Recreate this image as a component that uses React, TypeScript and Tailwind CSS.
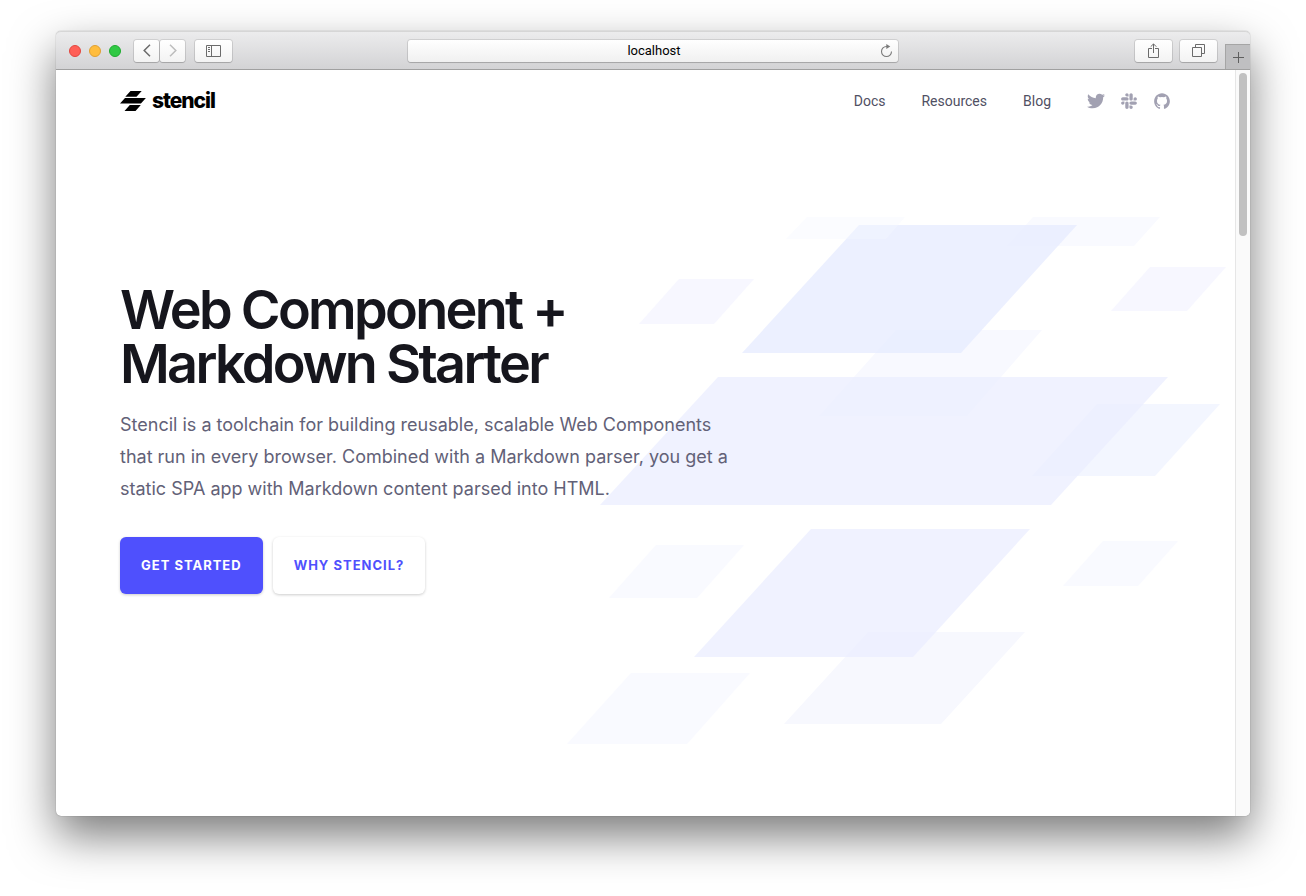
import type { ReactNode } from "react";
import { FaSlack, FaTwitter } from "react-icons/fa";
import { IoLogoGithub } from "react-icons/io5";

type Shape = { points: string; fill: string; opacity: number };

const shapes: Shape[] = [
  { points: "466,0 593,0 567,29 440,29", fill: "#f9faff", opacity: 1 },
  { points: "112,62 187,62 147,107 72,107", fill: "#f7f7ff", opacity: 1 },
  { points: "583,50 659,50 620,94 544,94", fill: "#f7f7ff", opacity: 1 },
  { points: "329,113 475,113 400,199 252,199", fill: "#f8f9ff", opacity: 1 },
  { points: "530,187 653,187 588,259 465,259", fill: "#f3f6ff", opacity: 1 },
  { points: "301,415 458,415 374,507 217,507", fill: "#f7f8fe", opacity: 1 },
  { points: "89,328 177,328 130,381 42,381", fill: "#f9faff", opacity: 1 },
  { points: "536,324 611,324 571,369 496,369", fill: "#f9faff", opacity: 1 },
  { points: "64,456 183,456 120,527 0,527", fill: "#f9faff", opacity: 1 },
  { points: "292,8 510,8 394,136 175,136", fill: "#e6ebff", opacity: 0.75 },
  { points: "151,160 601,160 484,288 33,288", fill: "#ebeeff", opacity: 0.75 },
  { points: "244,312 463,312 346,440 127,440", fill: "#ebeeff", opacity: 0.75 },
  { points: "240,0 338,0 319,22 219,22", fill: "#f5f7ff", opacity: 0.4 },
];

const navLinks = ["Docs", "Resources", "Blog"];

function ToolbarButton({ label, className = "", children }: { label: string; className?: string; children: ReactNode }) {
  return (
    <button
      type="button"
      aria-label={label}
      className={`flex h-[22px] items-center justify-center bg-linear-to-b from-white to-[#f3f3f3] text-[#6b6b6b] shadow-[0_0_0_1px_rgba(0,0,0,0.1),0_1px_1px_rgba(0,0,0,0.15)] ${className}`}
    >
      {children}
    </button>
  );
}

function TitleBar() {
  return (
    <div className="flex h-[39px] items-center rounded-t-[5px] border-t border-b border-t-[#d6d6d6] border-b-[#a0a0a0] bg-linear-to-b from-[#ececed] to-[#d3d3d5]">
      <div className="flex flex-1 items-center">
        <div className="ml-[13px] flex gap-2">
          <button type="button" aria-label="Close" className="size-3 rounded-full border border-[#e2463f] bg-[#ff5f57]" />
          <button type="button" aria-label="Minimize" className="size-3 rounded-full border border-[#e0a032] bg-[#ffbd3e]" />
          <button type="button" aria-label="Zoom" className="size-3 rounded-full border border-[#1eab2f] bg-[#30c944]" />
        </div>
        <div className="ml-[13px] flex gap-px">
          <ToolbarButton label="Back" className="w-[25px] rounded-[3px]">
            <svg width="8" height="13" viewBox="0 0 8 13" fill="none" stroke="currentColor" strokeWidth="1.5">
              <path d="M7 .8 1.2 6.500 7 12.200" />
            </svg>
          </ToolbarButton>
          <ToolbarButton label="Forward" className="w-[25px] rounded-[3px]">
            <svg width="8" height="13" viewBox="0 0 8 13" fill="none" stroke="#bdbdbd" strokeWidth="1.500">
              <path d="m1 .8 5.800 5.700L1 12.200" />
            </svg>
          </ToolbarButton>
        </div>
        <ToolbarButton label="Show sidebar" className="ml-[10px] w-[37px] rounded-[3px]">
          <svg width="15" height="12" viewBox="0 0 15 12" fill="none" stroke="currentColor">
            <path d="M.5.5h14v11H.5zM5.500.5v11M2 2.500h2M2 4.500h2M2 6.500h2" />
          </svg>
        </ToolbarButton>
      </div>
      <div className="flex h-[22px] w-[41%] items-center rounded-[3px] bg-linear-to-b from-white to-[#f0f0f0] pr-[5px] shadow-[0_0_0_1px_rgba(0,0,0,0.1),0_1px_1px_rgba(0,0,0,0.15)]">
        <input
          type="text"
          aria-label="Address"
          defaultValue="localhost"
          className="min-w-0 flex-1 bg-transparent pl-5 text-center font-[Roboto,sans-serif] text-[13px] text-black outline-none"
        />
        <button type="button" aria-label="Reload" className="text-[#7a7a7a]">
          <svg width="13" height="14" viewBox="0 0 13 14" fill="none">
            <path d="M7 2.500H6.500a5 5 0 1 0 5 5" stroke="currentColor" strokeWidth="1.100" />
            <path d="M6.300 0v5l4-2.500z" fill="currentColor" />
          </svg>
        </button>
      </div>
      <div className="flex h-full flex-1 items-center justify-end">
        <ToolbarButton label="Share" className="w-[37px] rounded-[3px]">
          <svg width="12" height="15" viewBox="0 0 12 15" fill="none" stroke="currentColor">
            <path d="M4 5.500H.5v9h10v-9H7M5.500 10V1M2.700 3.700 5.500.900l2.800 2.800" />
          </svg>
        </ToolbarButton>
        <ToolbarButton label="Show all tabs" className="ml-2 w-[37px] rounded-[3px]">
          <svg width="13" height="13" viewBox="0 0 13 13" fill="none" stroke="currentColor">
            <path d="M.5 3.500h9v9h-9zM3.500 3.500v-3h9v9h-3" />
          </svg>
        </ToolbarButton>
        <button
          type="button"
          aria-label="New tab"
          className="ml-2 flex h-[25px] w-[25px] items-center justify-center self-end border-t border-l border-[#a5a5a5] bg-[#bfbfc1] text-[#5f5f5f]"
        >
          <svg width="11" height="11" viewBox="0 0 11 11" stroke="currentColor">
            <path d="M5.500 0v11M0 5.500h11" />
          </svg>
        </button>
      </div>
    </div>
  );
}

function Header() {
  return (
    <header className="flex h-[62px] items-center justify-between">
      <a href="#home" className="flex items-center gap-[6px] text-black">
        <svg width="26" height="20" viewBox="0 0 26 20" fill="currentColor" aria-hidden="true">
          <path d="M10.500 0h11.200l-5.200 5.700H5.300zM5 7.100h20.900l-5 5.500H0zM9.800 14.100H20.800L15.500 20H4.500z" />
        </svg>
        <span className="text-[21px] leading-6 font-extrabold tracking-tighter">stencil</span>
      </a>
      <nav className="flex items-center font-[Roboto,sans-serif] text-sm text-[#505063]">
        <ul className="flex gap-9">
          {navLinks.map((link) => (
            <li key={link}>
              <a href={`#${link.toLowerCase()}`}>{link}</a>
            </li>
          ))}
        </ul>
        <div className="ml-9 flex items-center gap-[15px] text-[#a2a1b2]">
          <a href="#twitter" aria-label="Twitter">
            <FaTwitter size={18} />
          </a>
          <a href="#slack" aria-label="Slack">
            <FaSlack size={18} />
          </a>
          <a href="#github" aria-label="GitHub">
            <IoLogoGithub size={18} />
          </a>
        </div>
      </nav>
    </header>
  );
}

function HeroArt() {
  return (
    <svg
      className="pointer-events-none absolute top-[147px] right-2 h-[527px] w-[660px]"
      viewBox="0 0 660 527"
      aria-hidden="true"
    >
      {shapes.map((s) => (
        <polygon key={s.points} points={s.points} fill={s.fill} fillOpacity={s.opacity} />
      ))}
    </svg>
  );
}

export default function App() {
  return (
    <div className="flex min-h-screen flex-col bg-white px-14 pt-[31px] pb-20 font-[Inter,sans-serif]">
      <div className="flex flex-1 flex-col rounded-[5px] bg-white shadow-[0_0_1px_rgba(0,0,0,0.5),0_20px_45px_rgba(0,0,0,0.52)]">
        <TitleBar />
        <div className="flex flex-1">
          <div className="relative min-w-0 flex-1 px-16">
            <HeroArt />
            <div className="relative">
              <Header />
              <main className="pt-[151px] pb-16">
                <h1 className="text-[54px] leading-[54px] font-semibold tracking-tighter text-[#16161d]">
                  Web Component +<br />
                  Markdown Starter
                </h1>
                <p className="mt-[18px] max-w-[620px] text-lg leading-8 text-[#626177]">
                  Stencil is a toolchain for building reusable, scalable Web Components that run in every browser.
                  Combined with a Markdown parser, you get a static SPA app with Markdown content parsed into HTML.
                </p>
                <div className="mt-8 flex gap-[10px] text-[13px] font-bold tracking-[1px]">
                  <a
                    href="#get-started"
                    className="flex h-[57px] items-center rounded-md bg-[#4f50fd] px-[21px] text-white shadow-[0_1px_3px_rgba(0,0,0,0.2)]"
                  >
                    GET STARTED
                  </a>
                  <a
                    href="#why-stencil"
                    className="flex h-[57px] items-center rounded-md bg-white px-[21px] text-[#4f50fd] shadow-[0_1px_3px_rgba(0,0,0,0.2)]"
                  >
                    WHY STENCIL?
                  </a>
                </div>
              </main>
            </div>
          </div>
          <div className="w-[15px] rounded-br-[5px] border-l border-[#e6e6e6] bg-[#fafafa] pt-[3px] pl-[3px]">
            <div className="h-[163px] w-2 rounded-full bg-[#c1c1c1]" />
          </div>
        </div>
      </div>
    </div>
  );
}
